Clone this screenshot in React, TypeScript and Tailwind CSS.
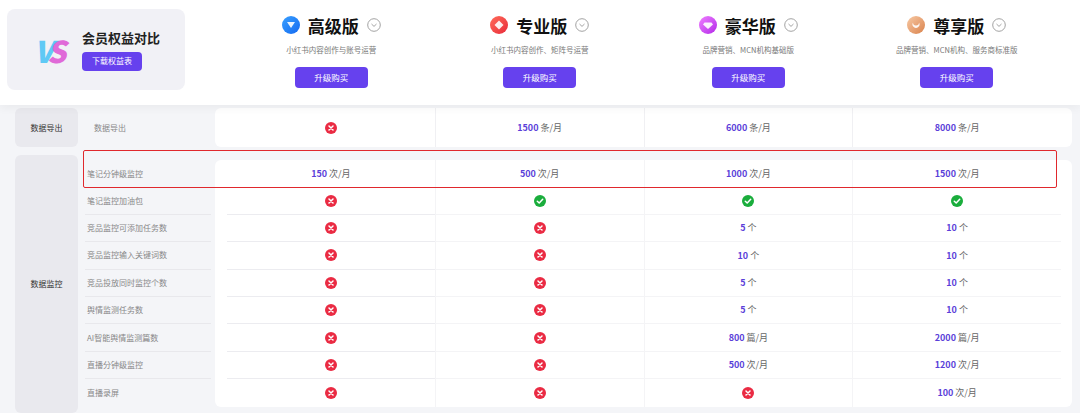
const X = "x", V = "v";

type Cell = string | [string, string];

const plans = [
  { name: "高级版", desc: "小红书内容创作与账号运营", grad: "from-[#3aa0ff] to-[#1668f0]", mark: "M5 6h8l-4 6z" },
  { name: "专业版", desc: "小红书内容创作、矩阵号运营", grad: "from-[#ff6a5a] to-[#e8243a]", mark: "M9 4.5l4.5 4.5L9 13.5 4.5 9z" },
  { name: "豪华版", desc: "品牌营销、MCN机构基础版", grad: "from-[#f07cff] to-[#b31ee8]", mark: "M5.5 6.5h7l1.5 2L9 13 4 8.5z" },
  { name: "尊享版", desc: "品牌营销、MCN机构、服务商标准版", grad: "from-[#f7c9a4] to-[#d9824a]", mark: "M6 6.5a3.5 3.5 0 1 0 6 0 3 3 0 0 1-6 0z" },
];

const monitorRows: { label: string; cells: Cell[] }[] = [
  { label: "笔记分钟级监控", cells: [["150", "次/月"], ["500", "次/月"], ["1000", "次/月"], ["1500", "次/月"]] },
  { label: "笔记监控加油包", cells: [X, V, V, V] },
  { label: "竞品监控可添加任务数", cells: [X, X, ["5", "个"], ["10", "个"]] },
  { label: "竞品监控输入关键词数", cells: [X, X, ["10", "个"], ["10", "个"]] },
  { label: "竞品投放同时监控个数", cells: [X, X, ["5", "个"], ["10", "个"]] },
  { label: "舆情监测任务数", cells: [X, X, ["5", "个"], ["10", "个"]] },
  { label: "AI智能舆情监测篇数", cells: [X, X, ["800", "篇/月"], ["2000", "篇/月"]] },
  { label: "直播分钟级监控", cells: [X, X, ["500", "次/月"], ["1200", "次/月"]] },
  { label: "直播录屏", cells: [X, X, X, ["100", "次/月"]] },
];

function Icon({ ok }: { ok: boolean }) {
  return ok ? (
    <svg width="12" height="12" viewBox="0 0 12 12">
      <circle cx="6" cy="6" r="6" fill="#1aad3c" />
      <path d="M3.3 6.2 5.2 8 8.7 4.3" stroke="#fff" strokeWidth="1.5" fill="none" strokeLinecap="round" strokeLinejoin="round" />
    </svg>
  ) : (
    <svg width="12" height="12" viewBox="0 0 12 12">
      <circle cx="6" cy="6" r="6" fill="#ea2b43" />
      <path d="M4 4l4 4M8 4 4 8" stroke="#fff" strokeWidth="1.5" strokeLinecap="round" />
    </svg>
  );
}

function Value({ c }: { c: Cell }) {
  if (c === X) return <Icon ok={false} />;
  if (c === V) return <Icon ok />;
  const [n, u] = c as [string, string];
  return (
    <span className="text-[9px]">
      <span className="font-bold text-[#5b3fd9]">{n}</span>
      <span className="text-[#666]"> {u}</span>
    </span>
  );
}

function Chevron() {
  return (
    <svg width="14" height="14" viewBox="0 0 14 14">
      <circle cx="7" cy="7" r="6.3" fill="none" stroke="#999" strokeWidth="0.9" />
      <path d="M4.5 6 7 8.4 9.5 6" fill="none" stroke="#999" strokeWidth="0.9" />
    </svg>
  );
}

export default function App() {
  return (
    <div className="w-[1080px] h-[413px] overflow-hidden bg-[#f4f5f8] text-[#333]" style={{ fontFamily: '"Noto Sans CJK SC", "Noto Sans", sans-serif' }}>
      {/* Header */}
      <div className="h-[105px] bg-white flex items-start shadow-[0_4px_8px_rgba(0,0,0,0.04)] relative z-10">
        <div className="ml-[7px] mt-[9px] w-[178px] h-[81px] rounded-lg bg-[#f1f1f6] flex items-center">
          <div className="ml-[27px] w-[36px] text-[30px] font-black italic leading-none tracking-[-6px]">
            <span className="text-[#5fc9f5]">V</span>
            <span className="text-[#e06ad8]">S</span>
          </div>
          <div className="ml-[12px]">
            <div className="text-[13px] font-bold text-[#222]">会员权益对比</div>
            <div className="mt-1 w-[60px] h-[19px] rounded-sm bg-[#6641ee] text-white text-[8px] flex items-center justify-center">下载权益表</div>
          </div>
        </div>
        <div className="flex ml-[42px]">
          {plans.map((p) => (
            <div key={p.name} className="w-[208.5px] flex flex-col items-center pt-[16px]">
              <div className="flex items-center gap-[8px]">
                <div className={`w-[18px] h-[18px] rounded-full bg-gradient-to-br ${p.grad}`}>
                  <svg width="18" height="18" viewBox="0 0 18 18"><path d={p.mark} fill="#fff" fillOpacity="0.9" /></svg>
                </div>
                <span className="text-[17px] font-bold text-[#111] leading-none">{p.name}</span>
                <Chevron />
              </div>
              <div className="mt-[10px] text-[7.5px] text-[#777]">{p.desc}</div>
              <div className="mt-[12px] w-[73px] h-[21px] rounded-sm bg-[#6641ee] text-white text-[8.5px] flex items-center justify-center">升级购买</div>
            </div>
          ))}
        </div>
      </div>

      {/* Data export */}
      <div className="flex mt-[3px] mx-[8px] h-[39px]">
        <div className="ml-[7px] w-[63px] bg-[#e9e9ee] rounded-md flex items-center justify-center text-[8px] text-[#333]">数据导出</div>
        <div className="w-[137px] pl-[16px] flex items-center text-[8px] text-[#888]">数据导出</div>
        <div className="flex-1 bg-white rounded-md flex items-center pl-[12px] pr-[11px]">
          {["x", ["1500", "条/月"], ["6000", "条/月"], ["8000", "条/月"]].map((c, i) => (
            <div key={i} className={`flex-1 h-full flex items-center justify-center ${i ? "border-l border-[#f0f0f3]" : ""}`}>
              <Value c={c as Cell} />
            </div>
          ))}
        </div>
      </div>

      {/* Data monitor */}
      <div className="flex mt-[8px] mx-[8px] h-[258px] relative">
        <div className="ml-[7px] w-[63px] bg-[#e9e9ee] rounded-md flex items-center justify-center text-[8px] text-[#333]">数据监控</div>
        <div className="flex-1 flex flex-col pt-[5px]">
          {monitorRows.map((r, ri) => (
            <div key={r.label} className="flex h-[27.4px]">
              <div className={`w-[126px] ml-[7px] mr-[4px] pl-[2px] flex items-center text-[8px] text-[#888] ${ri > 0 && ri < monitorRows.length - 1 ? "border-b border-[#e8e8ec]" : ""}`}>{r.label}</div>
              <div className={`flex-1 flex bg-white pl-[12px] pr-[11px] ${ri === 0 ? "rounded-t-md" : ""} ${ri === monitorRows.length - 1 ? "rounded-b-md" : ""}`}>
                {r.cells.map((c, i) => (
                  <div key={i} className={`flex-1 flex items-center justify-center ${i ? "border-l border-[#f4f4f6]" : ""} ${ri > 0 && ri < monitorRows.length - 1 ? "border-b border-[#ececf0]" : ""}`}>
                    <Value c={c} />
                  </div>
                ))}
              </div>
            </div>
          ))}
        </div>
        <div className="absolute left-[75px] top-[-5px] w-[974px] h-[38px] border-[1.5px] border-[#e0282d] rounded-[2px] pointer-events-none" />
      </div>
    </div>
  );
}
